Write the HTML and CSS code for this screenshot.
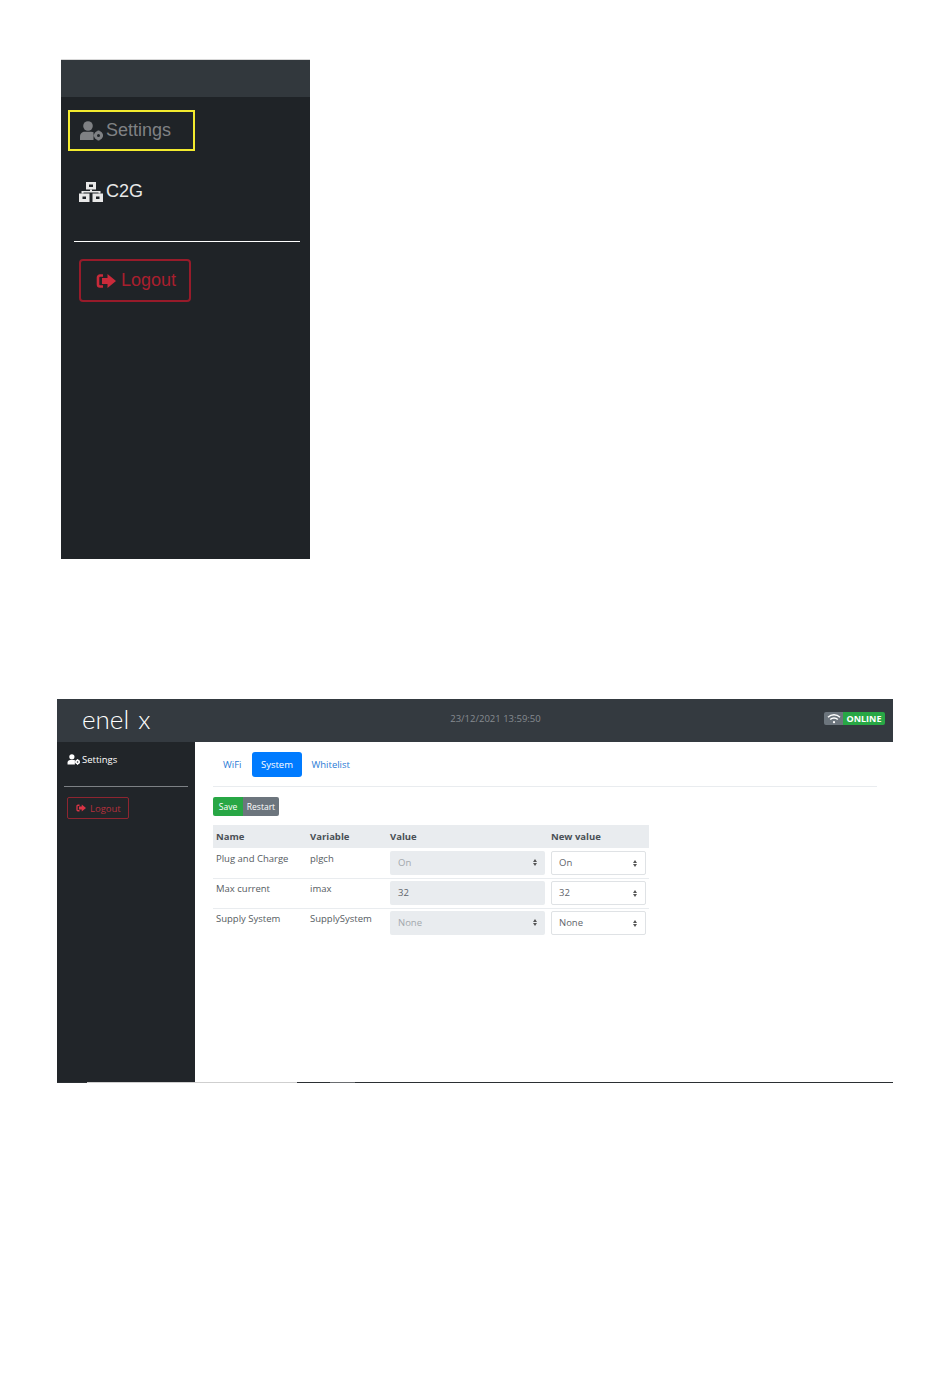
FILE: index.html
```html
<!DOCTYPE html>
<html lang="en">
<head>
    <meta charset="UTF-8">
    <title>Enel X Settings</title>
    <link rel="stylesheet" href="styles.css">
</head>
<body>
    <svg class="icon-defs" width="0" height="0">
        <symbol id="user-cog" viewBox="0 0 24 20">
            <circle cx="9" cy="5" r="4.800"/>
            <path d="M1 19v-3.500c0-3 2.200-4.700 4.800-4.700h6.400c1 0 1.800 .2 2.300 .5v7.700z"/>
            <circle cx="19.500" cy="14.500" r="3" fill="none" stroke="currentColor" stroke-width="3"/>
            <path d="M18.500 9.500h2v2h-2zM18.500 17.500h2v2h-2zM14.500 13.500h2v2h-2zM22.500 13.500h1.500v2h-1.500z"/>
        </symbol>
        <symbol id="sign-out" viewBox="0 0 20 16">
            <path d="M7 2.500H4A2 2 0 0 0 2 4.500v7A2 2 0 0 0 4 13.500h3" fill="none" stroke="currentColor" stroke-width="2.600"/>
            <path d="M11.500 1l8.500 7-8.500 7v-4H6V5h5.500z"/>
        </symbol>
    </svg>

    <section class="side-shot">
        <div class="side-shot-top"></div>
        <div class="side-shot-body">
            <a class="shot-link shot-link-active">
                <svg class="shot-icon"><use href="#user-cog"/></svg>Settings
            </a>
            <a class="shot-link shot-link-c2g">
                <svg class="shot-icon" viewBox="0 0 24 20">
                    <path d="M7 0h10v7.500H7zM10 2.500v2.500h4V2.500z" fill-rule="evenodd"/>
                    <path d="M0 11.500h10.500V20H0zM3.500 14.500v2.500h3.500v-2.500zM13.500 11.500H24V20H13.500zM17 14.500v2.500h3.500v-2.500z" fill-rule="evenodd"/>
                    <path d="M11 7.500h2v1.500h8.500v2.500h-2V10.500h-15v1h-2V9H11z"/>
                </svg>C2G
            </a>
            <hr class="shot-rule">
            <a class="shot-logout">
                <svg class="shot-logout-icon"><use href="#sign-out"/></svg>Logout
            </a>
        </div>
    </section>

    <section class="app-shot">
        <header class="topbar">
            <div class="logo">enel x</div>
            <div class="clock">23/12/2021 13:59:50</div>
            <div class="status">
                <span class="status-wifi">
                    <svg width="14" height="11" viewBox="0 0 14 11" fill="none" stroke="#fff" stroke-width="1.500">
                        <path d="M1 4.200a8.500 8.500 0 0 1 12 0M3.200 6.500a5.300 5.300 0 0 1 7.600 0"/>
                        <circle cx="7" cy="9.200" r="1.100" fill="#fff" stroke="none"/>
                    </svg>
                </span><span class="status-online">ONLINE</span>
            </div>
        </header>
        <div class="app-main">
            <aside class="sidebar">
                <a class="side-link">
                    <svg class="side-icon"><use href="#user-cog"/></svg>Settings
                </a>
                <hr class="side-rule">
                <a class="side-logout">
                    <svg class="side-logout-icon"><use href="#sign-out"/></svg>Logout
                </a>
            </aside>
            <main class="content">
                <nav class="tabs">
                    <a class="tab tab-first">WiFi</a>
                    <a class="tab tab-active">System</a>
                    <a class="tab">Whitelist</a>
                </nav>
                <div class="btn-group">
                    <button class="btn btn-save">Save</button><button class="btn btn-restart">Restart</button>
                </div>
                <table class="settings">
                    <thead>
                        <tr>
                            <th class="col-name">Name</th>
                            <th class="col-var">Variable</th>
                            <th class="col-value">Value</th>
                            <th class="col-new">New value</th>
                        </tr>
                    </thead>
                    <tbody>
                        <tr>
                            <td>Plug and Charge</td>
                            <td>plgch</td>
                            <td><div class="field field-off">On<span class="arrows"></span></div></td>
                            <td><div class="field field-new">On<span class="arrows"></span></div></td>
                        </tr>
                        <tr>
                            <td>Max current</td>
                            <td>imax</td>
                            <td><div class="field field-input">32</div></td>
                            <td><div class="field field-new">32<span class="arrows"></span></div></td>
                        </tr>
                        <tr>
                            <td>Supply System</td>
                            <td>SupplySystem</td>
                            <td><div class="field field-off">None<span class="arrows"></span></div></td>
                            <td><div class="field field-new">None<span class="arrows"></span></div></td>
                        </tr>
                    </tbody>
                </table>
            </main>
        </div>
        <div class="edge">
            <span class="edge-dark edge-a"></span>
            <span class="edge-grey edge-b"></span>
            <span class="edge-dark edge-c"></span>
            <span class="edge-mid edge-d"></span>
            <span class="edge-dark edge-e"></span>
        </div>
    </section>
</body>
</html>
```

FILE: styles.css
```css
body {
    margin: 0;
    padding-top: 59px;
    background-color: #fff;
    font-family: 'Open Sans', 'Noto Sans', sans-serif;
    color: #212529;
}
a {
    display: block;
}
.icon-defs {
    position: absolute;
}

/* Top crop: sidebar only */
.side-shot {
    width: 249px;
    margin-left: 61px;
    border-top: 1px solid #d8d8d8;
    font-family: 'Liberation Sans', sans-serif;
}
.side-shot-top {
    height: 37px;
    background-color: #32383d;
}
.side-shot-body {
    height: 462px;
    padding: 13px 0 0 7px;
    box-sizing: border-box;
    background-color: #1f2327;
}
.shot-link {
    display: flex;
    align-items: center;
    height: 41px;
    width: 127px;
    padding-left: 11px;
    box-sizing: border-box;
    font-size: 18px;
    color: #e8e8e8;
}
.shot-link-active {
    border: 2px solid #f2ea2e;
    padding-left: 9px;
    color: #7f8184;
}
.shot-link-c2g {
    margin-top: 20px;
}
.shot-icon {
    width: 24px;
    height: 20px;
    margin-right: 3px;
    fill: currentColor;
    color: inherit;
}
.shot-rule {
    width: 226px;
    margin: 29px 0 0 6px;
    border: 0;
    border-top: 1px solid #fff;
}
.shot-logout {
    display: flex;
    align-items: center;
    width: 112px;
    height: 43px;
    margin: 17px 0 0 11px;
    padding-left: 15px;
    box-sizing: border-box;
    border: 2px solid #971b2a;
    border-radius: 4px;
    font-size: 18px;
    color: #a81f2e;
}
.shot-logout-icon {
    width: 20px;
    height: 16px;
    margin-right: 5px;
    fill: #c92a3a;
    color: #c92a3a;
}

/* Bottom crop: full settings page */
.app-shot {
    width: 836px;
    margin: 140px 0 0 57px;
}
.topbar {
    display: flex;
    align-items: center;
    height: 43px;
    background-color: #343a40;
}
.logo {
    width: 138px;
    margin-top: -3px;
    padding-left: 25px;
    box-sizing: border-box;
    font-family: 'Lato', sans-serif;
    font-size: 26px;
    font-weight: 300;
    word-spacing: 2px;
    color: #fff;
}
.clock {
    width: 601px;
    text-align: center;
    margin-top: -5px;
    font-size: 9.500px;
    color: #868b90;
}
.status {
    display: flex;
    margin-left: 28px;
    margin-top: -4px;
}
.status-wifi {
    display: flex;
    align-items: center;
    justify-content: center;
    width: 19px;
    height: 13px;
    background-color: #6c757d;
    border-radius: 2px 0 0 2px;
}
.status-online {
    width: 42px;
    height: 13px;
    line-height: 13px;
    text-align: center;
    font-size: 9px;
    font-weight: 700;
    color: #fff;
    background-color: #28a745;
    border-radius: 0 2px 2px 0;
}
.app-main {
    display: flex;
    height: 340px;
}
.sidebar {
    width: 138px;
    padding: 10px 7px 0;
    box-sizing: border-box;
    background-color: #212529;
}
.side-link {
    display: flex;
    align-items: center;
    height: 15px;
    padding-left: 3px;
    font-size: 9.500px;
    color: #fff;
}
.side-icon {
    width: 13px;
    height: 11px;
    margin-right: 2px;
    fill: #fff;
    color: #fff;
}
.side-rule {
    margin: 19px 0 0;
    border: 0;
    border-top: 1px solid #7d8185;
}
.side-logout {
    display: flex;
    align-items: center;
    width: 62px;
    height: 22px;
    margin: 10px 0 0 3px;
    padding-left: 8px;
    box-sizing: border-box;
    border: 1px solid #8e2530;
    border-radius: 2px;
    font-size: 9.500px;
    color: #b5303c;
}
.side-logout-icon {
    width: 10px;
    height: 8px;
    margin-right: 4px;
    fill: #d93445;
    color: #d93445;
}
.content {
    flex: 1;
    padding: 10px 16px 0 18px;
    background-color: #fff;
}
.tabs {
    display: flex;
    height: 34px;
    border-bottom: 1px solid #e9ecef;
}
.tab {
    height: 25px;
    line-height: 25px;
    padding: 0 10px;
    font-size: 9.500px;
    color: #2a7bd6;
}
.tab-first {
    margin-right: 1px;
}
.tab-active {
    padding: 0 8.500px;
    color: #fff;
    background-color: #007bff;
    border-radius: 3px;
}
.btn-group {
    display: flex;
    margin-top: 10px;
}
.btn {
    height: 19px;
    padding: 0;
    border: 0;
    font-family: inherit;
    font-size: 8.500px;
    color: #fff;
}
.btn-save {
    width: 30px;
    background-color: #28a745;
    border-radius: 2px 0 0 2px;
}
.btn-restart {
    width: 36px;
    background-color: #6c757d;
    border-radius: 0 2px 2px 0;
}
.settings {
    width: 436px;
    margin-top: 9px;
    border-collapse: collapse;
    table-layout: fixed;
    font-size: 9.500px;
}
.settings th {
    height: 23px;
    padding: 0 3px;
    text-align: left;
    font-size: 9.500px;
    font-weight: 700;
    color: #4a5056;
    background-color: #e9ecef;
}
.settings th.col-name {
    width: 88px;
}
.settings th.col-var {
    width: 74px;
}
.settings th.col-value {
    width: 155px;
}
.settings td {
    height: 30px;
    padding: 2px 3px 3px;
    box-sizing: border-box;
    vertical-align: top;
    line-height: 16px;
    color: #555b61;
    border-bottom: 1px solid #e9ecef;
}
.settings tbody tr:first-child td {
    padding: 3px 3px 2px;
}
.settings tr:last-child td {
    border-bottom: 0;
}
.field {
    position: relative;
    height: 24px;
    line-height: 24px;
    padding-left: 8px;
    box-sizing: border-box;
    border-radius: 2px;
    font-size: 9.500px;
}
.field-off {
    color: #a3a8ad;
    background-color: #e9ecef;
}
.field-input {
    color: #5f656b;
    background-color: #e9ecef;
}
.field-new {
    color: #5f656b;
    border: 1px solid #dfe2e5;
    line-height: 22px;
    padding-left: 7px;
    background-color: #fff;
}
.arrows {
    position: absolute;
    right: 8px;
    top: 8px;
    width: 0;
    height: 0;
    border-left: 2.500px solid transparent;
    border-right: 2.500px solid transparent;
    border-bottom: 3px solid #555;
}
.arrows::after {
    content: "";
    position: absolute;
    left: -2.500px;
    top: 4px;
    border-left: 2.500px solid transparent;
    border-right: 2.500px solid transparent;
    border-top: 3px solid #555;
}
.edge {
    display: flex;
    height: 1px;
}
.edge span {
    display: block;
}
.edge-dark {
    background-color: #2b2f33;
}
.edge-grey {
    background-color: #cfcfcf;
}
.edge-mid {
    background-color: #6a6d70;
}
.edge-a {
    width: 30px;
}
.edge-b {
    width: 210px;
}
.edge-c {
    width: 33px;
}
.edge-d {
    width: 25px;
}
.edge-e {
    flex: 1;
}
```
